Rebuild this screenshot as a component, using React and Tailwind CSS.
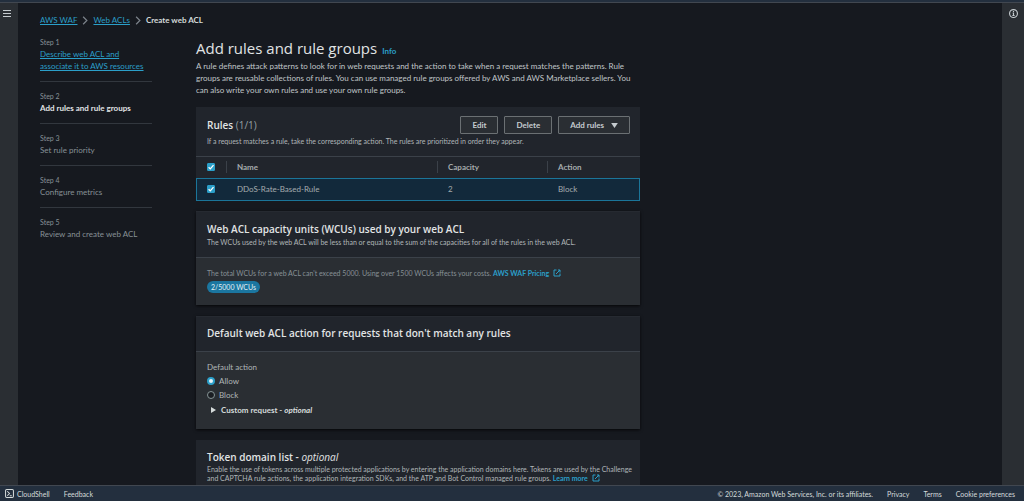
import React from 'react';

const STEPS = [
  { title: 'Describe web ACL and associate it to AWS resources', state: 'done' },
  { title: 'Add rules and rule groups', state: 'current' },
  { title: 'Set rule priority', state: 'next' },
  { title: 'Configure metrics', state: 'next' },
  { title: 'Review and create web ACL', state: 'next' },
];

const RULES = [{ name: 'DDoS-Rate-Based-Rule', capacity: 2, action: 'Block' }];

const FOOTER_LINKS = ['Privacy', 'Terms', 'Cookie preferences'];

function ExternalIcon() {
  return (
    <svg viewBox="0 0 16 16" fill="none" stroke="currentColor" strokeWidth="2" className="inline-block w-2 h-2 ml-1 align-[-1px]" aria-hidden="true">
      <path d="M7 2H2v12h12V9" />
      <path d="M10 2h4v5M14 2 6 10" />
    </svg>
  );
}

function Chevron() {
  return (
    <svg viewBox="0 0 8 12" fill="none" stroke="#7c838b" strokeWidth="1.6" className="w-[6px] h-[9px] mx-[5px]" aria-hidden="true">
      <path d="M1.5 1 6.5 6l-5 5" />
    </svg>
  );
}

function Checkbox({ label }) {
  return (
    <span className="grid w-2 h-2">
      <input type="checkbox" defaultChecked aria-label={label} className="peer appearance-none col-start-1 row-start-1 w-2 h-2 rounded-[1px] border border-[#879596] checked:border-[#2b9fc9] checked:bg-[#2b9fc9]" />
      <svg viewBox="0 0 8 8" fill="none" stroke="#fff" strokeWidth="1.3" className="col-start-1 row-start-1 w-2 h-2 pointer-events-none invisible peer-checked:visible" aria-hidden="true">
        <path d="M1.6 4.2 3.3 5.9 6.5 2.1" />
      </svg>
    </span>
  );
}

function Radio({ label, checked }) {
  return (
    <label className="flex items-center gap-1 w-fit">
      <input
        type="radio"
        name="default-action"
        defaultChecked={checked}
        className="appearance-none w-2 h-2 rounded-full border border-[#879596] bg-[#1a1d22] checked:border-[2px] checked:border-[#2b9fc9] checked:bg-[#e8f4f8]"
      />
      {label}
    </label>
  );
}

function Button({ children }) {
  return (
    <button className="h-[18px] px-[11px] border border-[#6b7073] bg-[#2a2e33] text-[#c5cbcf] text-[8px] leading-3 font-bold rounded-[1px] flex items-center whitespace-nowrap">
      {children}
    </button>
  );
}

function PanelTitle({ children }) {
  return <h2 className="font-['Open_Sans',sans-serif] text-[10px] leading-4 font-semibold text-[#e1e4e5]">{children}</h2>;
}

function Breadcrumbs() {
  return (
    <nav aria-label="Breadcrumbs" className="flex items-center leading-3">
      <a href="#waf" className="text-[#2b9fc9] underline">AWS WAF</a>
      <Chevron />
      <a href="#acls" className="text-[#2b9fc9] underline">Web ACLs</a>
      <Chevron />
      <span className="font-bold text-[#d5dbdb]">Create web ACL</span>
    </nav>
  );
}

function StepList() {
  const tone = {
    current: 'font-bold text-[#e1e4e5]',
    next: 'text-[#879196]',
  };
  return (
    <ol className="w-28 shrink-0">
      {STEPS.map((step, idx) => (
        <li key={step.title} className="pb-[9px] mb-2 border-b border-[#32373e] last:border-b-0">
          <span className="block text-[7px] leading-3 text-[#879196]">Step {idx + 1}</span>
          {step.state === 'done' ? (
            <a href="#step-1" className="block text-[#2b9fc9] underline">{step.title}</a>
          ) : (
            <span className={`block ${tone[step.state]}`}>{step.title}</span>
          )}
        </li>
      ))}
    </ol>
  );
}

function RulesPanel() {
  return (
    <section className="mt-[11px] bg-[#21252c]">
      <div className="pt-[9px] pb-[11px] pl-[11px] pr-[10px]">
        <div className="flex items-center gap-[6px]">
          <div className="flex-1">
            <PanelTitle>
              Rules <span className="font-normal text-[#95a0a4]">(1/1)</span>
            </PanelTitle>
          </div>
          <Button>Edit</Button>
          <Button>Delete</Button>
          <Button>
            Add rules
            <svg viewBox="0 0 8 6" fill="currentColor" className="w-[7px] h-[5px] ml-[7px]" aria-hidden="true">
              <path d="M0 0h8L4 6z" />
            </svg>
          </Button>
        </div>
        <p className="mt-[3px] text-[7px] leading-2 text-[#b0b6b8]">
          If a request matches a rule, take the corresponding action. The rules are prioritized in order they appear.
        </p>
      </div>
      <table className="w-full table-fixed border-collapse text-left text-[#a6acae]">
        <colgroup>
          <col className="w-[30px]" />
          <col />
          <col className="w-[110px]" />
          <col className="w-[93px]" />
        </colgroup>
        <thead>
          <tr className="h-[21px] border-t border-[#3b4149]">
            <th className="pl-[11px]"><Checkbox label="Select all rules" /></th>
            <th><div className="border-l border-[#3b4149] pl-[10px]">Name</div></th>
            <th><div className="border-l border-[#3b4149] pl-[10px]">Capacity</div></th>
            <th><div className="border-l border-[#3b4149] pl-[10px]">Action</div></th>
          </tr>
        </thead>
        <tbody>
          {RULES.map((rule) => (
            <tr key={rule.name} className="h-[23px] bg-[#12293b] outline -outline-offset-1 outline-[#1b7599]">
              <td className="pl-[11px]"><Checkbox label={rule.name} /></td>
              <td className="pl-[11px]">{rule.name}</td>
              <td className="pl-[11px]">{rule.capacity}</td>
              <td className="pl-[11px]">{rule.action}</td>
            </tr>
          ))}
        </tbody>
      </table>
    </section>
  );
}

export default function App() {
  return (
    <div className="h-screen flex flex-col overflow-hidden bg-[#16191f] text-[#c0c6c9] text-[8px] leading-3 font-['Lato','Open_Sans',sans-serif]">
      <header className="h-[3px] shrink-0 bg-[#232f3e] border-b border-[#414750]" />

      <div className="flex-1 min-h-0 flex">
        <aside className="w-[18px] shrink-0 bg-[#2a2e33] pt-[7px]">
          <button aria-label="Open navigation" className="block ml-[3px] text-[#c5cbcf]">
            <svg viewBox="0 0 8 8" fill="currentColor" className="w-2 h-2">
              <path d="M0 0h8v1H0zM0 3h8v1H0zM0 6h8v1H0z" />
            </svg>
          </button>
        </aside>

        <main className="flex-1 min-w-0 overflow-hidden pl-[22px] pt-[11px]">
          <Breadcrumbs />
          <div className="flex gap-[44px] mt-[10px]">
            <StepList />

            <div className="flex-1 min-w-0 max-w-[444px] mt-[2px]">
              <div className="flex items-baseline gap-[5px]">
                <h1 className="font-['Open_Sans',sans-serif] text-[15px] leading-5 text-[#e1e4e5]">Add rules and rule groups</h1>
                <a href="#info" className="font-bold text-[#2b9fc9]">Info</a>
              </div>
              <p className="mt-[2px]">
                A rule defines attack patterns to look for in web requests and the action to take when a request matches the patterns. Rule
                groups are reusable collections of rules. You can use managed rule groups offered by AWS and AWS Marketplace sellers. You
                can also write your own rules and use your own rule groups.
              </p>

              <RulesPanel />

              {/* Capacity units */}
              <section className="mt-[10px] bg-[#2a2e33] border-t border-[#262a31] shadow-sm shadow-black/60">
                <div className="bg-[#21252c] border-b border-[#3b4149] px-[11px] pt-[9px] pb-[11px]">
                  <PanelTitle>Web ACL capacity units (WCUs) used by your web ACL</PanelTitle>
                  <p className="mt-px text-[7px] leading-2 text-[#b0b6b8]">
                    The WCUs used by the web ACL will be less than or equal to the sum of the capacities for all of the rules in the web ACL.
                  </p>
                </div>
                <div className="px-[11px] pt-[9px] pb-[12px]">
                  <p className="text-[7px] leading-3 text-[#879196]">
                    The total WCUs for a web ACL can't exceed 5000. Using over 1500 WCUs affects your costs.{' '}
                    <a href="#pricing" className="font-bold text-[#2b9fc9]">AWS WAF Pricing<ExternalIcon /></a>
                  </p>
                  <span className="block w-fit mt-[2px] px-1 rounded-full bg-[#1b76a0] text-[7px] leading-3 text-[#e1f0f5]">2/5000 WCUs</span>
                </div>
              </section>

              {/* Default action */}
              <section className="mt-[11px] bg-[#2a2e33] border-t border-[#262a31] shadow-sm shadow-black/60">
                <div className="bg-[#21252c] border-b border-[#3b4149] px-[11px] pt-2 pb-[10px]">
                  <PanelTitle>Default web ACL action for requests that don't match any rules</PanelTitle>
                </div>
                <div className="px-[11px] pt-[9px] pb-[13px]">
                  <fieldset className="flex flex-col gap-[2px] text-[#b0b6b8]">
                    <legend className="mb-[2px]">Default action</legend>
                    <Radio label="Allow" checked />
                    <Radio label="Block" />
                  </fieldset>
                  <button className="flex items-center gap-[5px] mt-[3px] ml-1 font-bold text-[#d5dbdb]">
                    <svg viewBox="0 0 5 6" fill="currentColor" className="w-[5px] h-[6px]" aria-hidden="true">
                      <path d="M0 0 5 3 0 6z" />
                    </svg>
                    <span>Custom request - <i>optional</i></span>
                  </button>
                </div>
              </section>

              {/* Token domains */}
              <section className="mt-[11px] bg-[#21252c] px-[11px] pt-[9px] pb-[11px]">
                <PanelTitle>
                  Token domain list - <i className="font-normal">optional</i>
                </PanelTitle>
                <p className="text-[7px] leading-[9px] text-[#b0b6b8] whitespace-nowrap">
                  Enable the use of tokens across multiple protected applications by entering the application domains here. Tokens are used by the Challenge
                  <br />
                  and CAPTCHA rule actions, the application integration SDKs, and the ATP and Bot Control managed rule groups.{' '}
                  <a href="#learn" className="font-bold text-[#2b9fc9]">Learn more<ExternalIcon /></a>
                </p>
              </section>
            </div>
          </div>
        </main>

        <aside className="w-[22px] shrink-0 bg-[#2a2e33] pt-[6px]">
          <button aria-label="Open info panel" className="block mx-auto text-[#c5cbcf]">
            <svg viewBox="0 0 16 16" fill="none" stroke="currentColor" strokeWidth="2" className="w-[9px] h-[9px]">
              <circle cx="8" cy="8" r="7" />
              <path d="M8 3.5v2M6.5 7H8v4.5M6 11.5h4" />
            </svg>
          </button>
        </aside>
      </div>

      <footer className="h-4 shrink-0 flex items-center justify-between pl-[5px] pr-[9px] bg-[#232f3e] border-t border-[#414750] text-[7px] text-[#d5dbdb]">
        <div className="flex items-center gap-[14px]">
          <button className="flex items-center gap-[3px]">
            <svg viewBox="0 0 16 16" fill="none" stroke="currentColor" strokeWidth="1.8" className="w-[9px] h-[9px]" aria-hidden="true">
              <rect x="1" y="1" width="14" height="14" rx="2" />
              <path d="m4 4 4 4-4 4M8.5 12H12" />
            </svg>
            CloudShell
          </button>
          <button>Feedback</button>
        </div>
        <div className="flex items-center gap-[14px]">
          <span>© 2023, Amazon Web Services, Inc. or its affiliates.</span>
          {FOOTER_LINKS.map((link) => (
            <a key={link} href="#legal">{link}</a>
          ))}
        </div>
      </footer>
    </div>
  );
}
